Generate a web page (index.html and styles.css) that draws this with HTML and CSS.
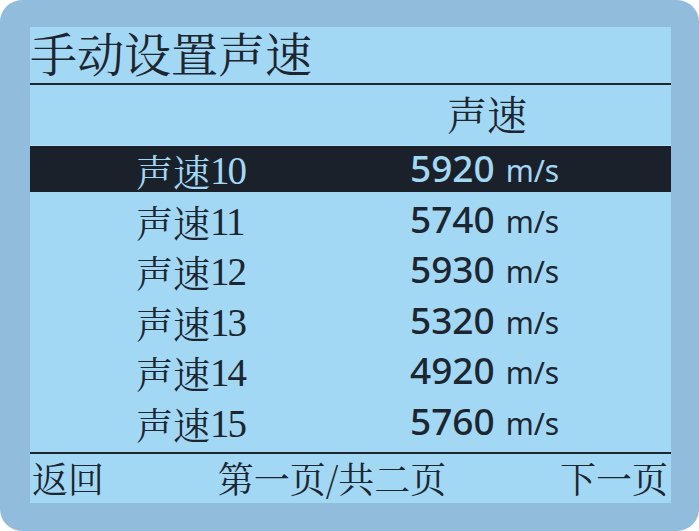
FILE: index.html
```html
<!DOCTYPE html>
<html lang="zh-CN">
<head>
<meta charset="utf-8">
<title>手动设置声速</title>
<link rel="stylesheet" href="styles.css">
</head>
<body>
<div class="frame">
  <div class="panel">
    <div class="title">手动设置声速</div>
    <div class="head">
      <div></div>
      <div class="head-label">声速</div>
    </div>
    <div class="list">
      <div class="row sel"><div class="name">声速<span class="dig">10</span></div><div class="val"><span class="num">5920</span><span class="unit">m/s</span></div></div>
      <div class="row"><div class="name">声速<span class="dig">11</span></div><div class="val"><span class="num">5740</span><span class="unit">m/s</span></div></div>
      <div class="row"><div class="name">声速<span class="dig">12</span></div><div class="val"><span class="num">5930</span><span class="unit">m/s</span></div></div>
      <div class="row"><div class="name">声速<span class="dig">13</span></div><div class="val"><span class="num">5320</span><span class="unit">m/s</span></div></div>
      <div class="row"><div class="name">声速<span class="dig">14</span></div><div class="val"><span class="num">4920</span><span class="unit">m/s</span></div></div>
      <div class="row"><div class="name">声速<span class="dig">15</span></div><div class="val"><span class="num">5760</span><span class="unit">m/s</span></div></div>
    </div>
    <div class="foot">
      <span>返回</span>
      <span>第一页/共二页</span>
      <span>下一页</span>
    </div>
  </div>
</div>
</body>
</html>
```
FILE: styles.css
```css
html, body {
  margin: 0;
  padding: 0;
  background: #ffffff;
}
.frame {
  width: 699px;
  height: 531px;
  box-sizing: border-box;
  background: #91bcdb;
  border-radius: 22px;
  padding: 27px 28px 28px 30px;
}
.panel {
  width: 641px;
  height: 476px;
  background: #a3d8f5;
  color: #1c2630;
  font-family: "Noto Serif CJK SC", "Liberation Serif", "Noto Sans CJK SC", serif;
  display: flex;
  flex-direction: column;
}
.title {
  flex-shrink: 0;
  height: 56px;
  font-size: 47px;
  line-height: 50px;
  border-bottom: 2px solid #1c2630;
  white-space: nowrap;
}
.head {
  flex-shrink: 0;
  height: 61px;
  display: grid;
  grid-template-columns: 320px 1fr;
  align-items: center;
}
.head-label {
  font-size: 40px;
  padding-left: 97px;
  line-height: 54px;
  padding-bottom: 6px;
}
.list {
  flex-shrink: 0;
  display: flex;
  flex-direction: column;
  gap: 4.6px;
  height: 306px;
}
.row {
  height: 46px;
  display: grid;
  grid-template-columns: 320px 1fr;
  align-items: center;
}
.row.sel {
  background: #1b212a;
  color: #a3d8f5;
  box-shadow: 0 -1px 0 #b5e3fb;
}
.name {
  padding-left: 106px;
  font-size: 37px;
  line-height: 42px;
  padding-bottom: 4px;
  white-space: nowrap;
}
.dig {
  font-family: "Liberation Serif", serif;
  font-size: 39px;
  letter-spacing: -2px;
  vertical-align: 3px;
}
.val {
  padding-left: 60px;
  font-family: "Noto Sans", "Open Sans", sans-serif;
  line-height: 44px;
  padding-bottom: 2px;
  white-space: nowrap;
}
.num {
  font-size: 37px;
  font-weight: 500;
}
.unit {
  font-size: 30px;
  margin-left: 11px;
}
.foot {
  border-top: 2px solid #1c2630;
  flex: 1;
  min-height: 0;
  display: flex;
  justify-content: space-between;
  align-items: center;
  padding: 0 3px 2px 2px;
  font-size: 36px;
  line-height: 1;
}
```
